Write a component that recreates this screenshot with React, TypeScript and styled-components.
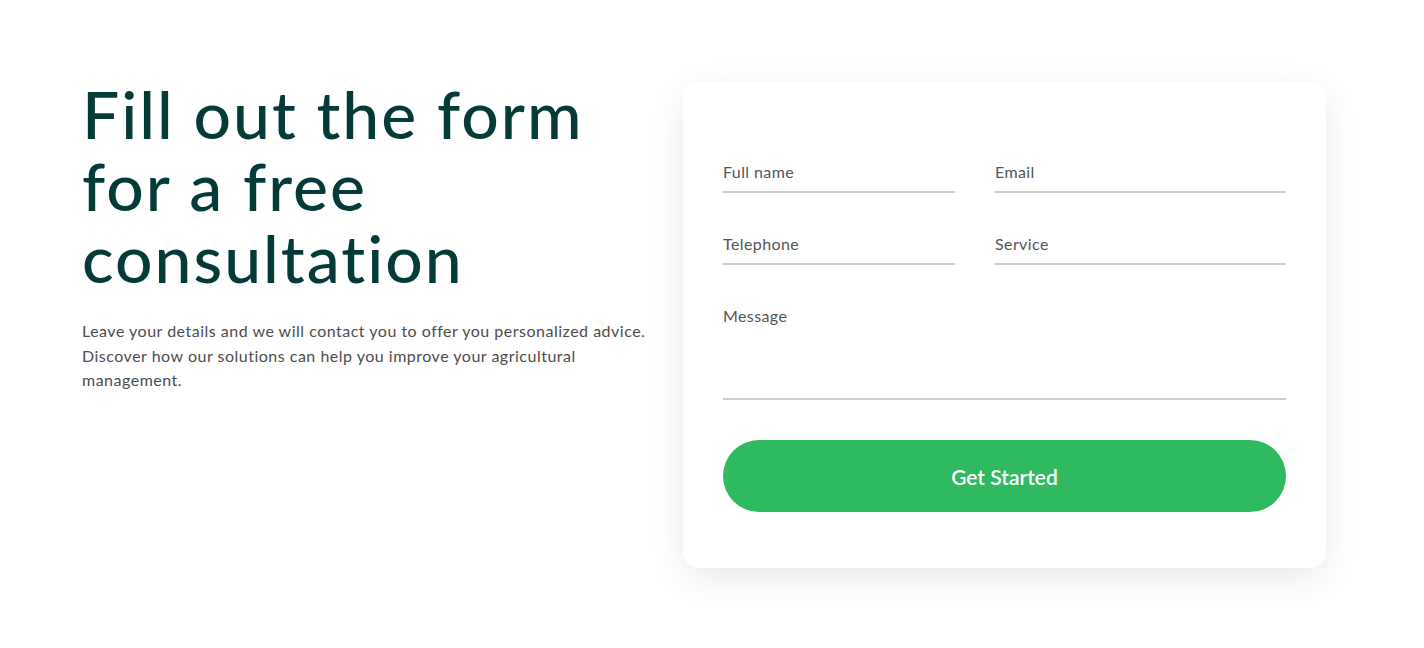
import React from "react";
import styled, { createGlobalStyle } from "styled-components";

const Global = createGlobalStyle`
  html, body { margin: 0; padding: 0; background: #fff; }
  body { font-family: Lato, "Noto Sans", sans-serif; }
  * { box-sizing: border-box; }
`;

const Page = styled.div`
  width: 1424px;
  height: 648px;
  display: flex;
  align-items: flex-start;
  padding: 82px 98px 0 82px;
`;

const Intro = styled.div`
  flex: 1;
  min-width: 0;
`;

const Heading = styled.h1`
  margin: -4px 0 0;
  font-family: Lato, "Noto Sans", sans-serif;
  font-weight: 500;
  font-size: 66px;
  line-height: 72px;
  color: #043b39;
  letter-spacing: 2px;
`;

const Lead = styled.p`
  margin: 25px 0 0;
  font-size: 16px;
  line-height: 24.5px;
  letter-spacing: 0.5px;
  color: #4d4d4d;
  max-width: 580px;
`;

const Card = styled.form`
  width: 643px;
  flex: none;
  background: #fff;
  border-radius: 16px;
  box-shadow: 0 10px 40px rgba(0, 0, 0, 0.09);
  padding: 78px 40px 56px;
  display: flex;
  flex-direction: column;
`;

const Grid = styled.div`
  display: grid;
  grid-template-columns: 232px 1fr;
  column-gap: 40px;
  row-gap: 39px;
`;

const Field = styled.label<{ $wide?: boolean; $tall?: boolean }>`
  grid-column: ${(p) => (p.$wide ? "1 / -1" : "auto")};
  display: block;
  height: ${(p) => (p.$tall ? "96px" : "33px")};
  border-bottom: 2px solid #cccccc;
  font-size: 16px;
  line-height: 24px;
  letter-spacing: 0.4px;
  color: #555;
`;

const Button = styled.button`
  margin-top: 40px;
  height: 72px;
  border: none;
  border-radius: 36px;
  background: #2fba5f;
  color: #fff;
  font-family: Lato, "Noto Sans", sans-serif;
  font-size: 21px;
  font-weight: 600;
  cursor: pointer;
`;

export default function App() {
  return (
    <>
      <Global />
      <Page>
        <Intro>
          <Heading>
            Fill out the form
            <br />
            for a free
            <br />
            consultation
          </Heading>
          <Lead>
            Leave your details and we will contact you to offer you personalized advice. Discover how our
            solutions can help you improve your agricultural management.
          </Lead>
        </Intro>
        <Card onSubmit={(e) => e.preventDefault()}>
          <Grid>
            <Field>Full name</Field>
            <Field>Email</Field>
            <Field>Telephone</Field>
            <Field>Service</Field>
            <Field $wide $tall>Message</Field>
          </Grid>
          <Button type="submit">Get Started</Button>
        </Card>
      </Page>
    </>
  );
}
